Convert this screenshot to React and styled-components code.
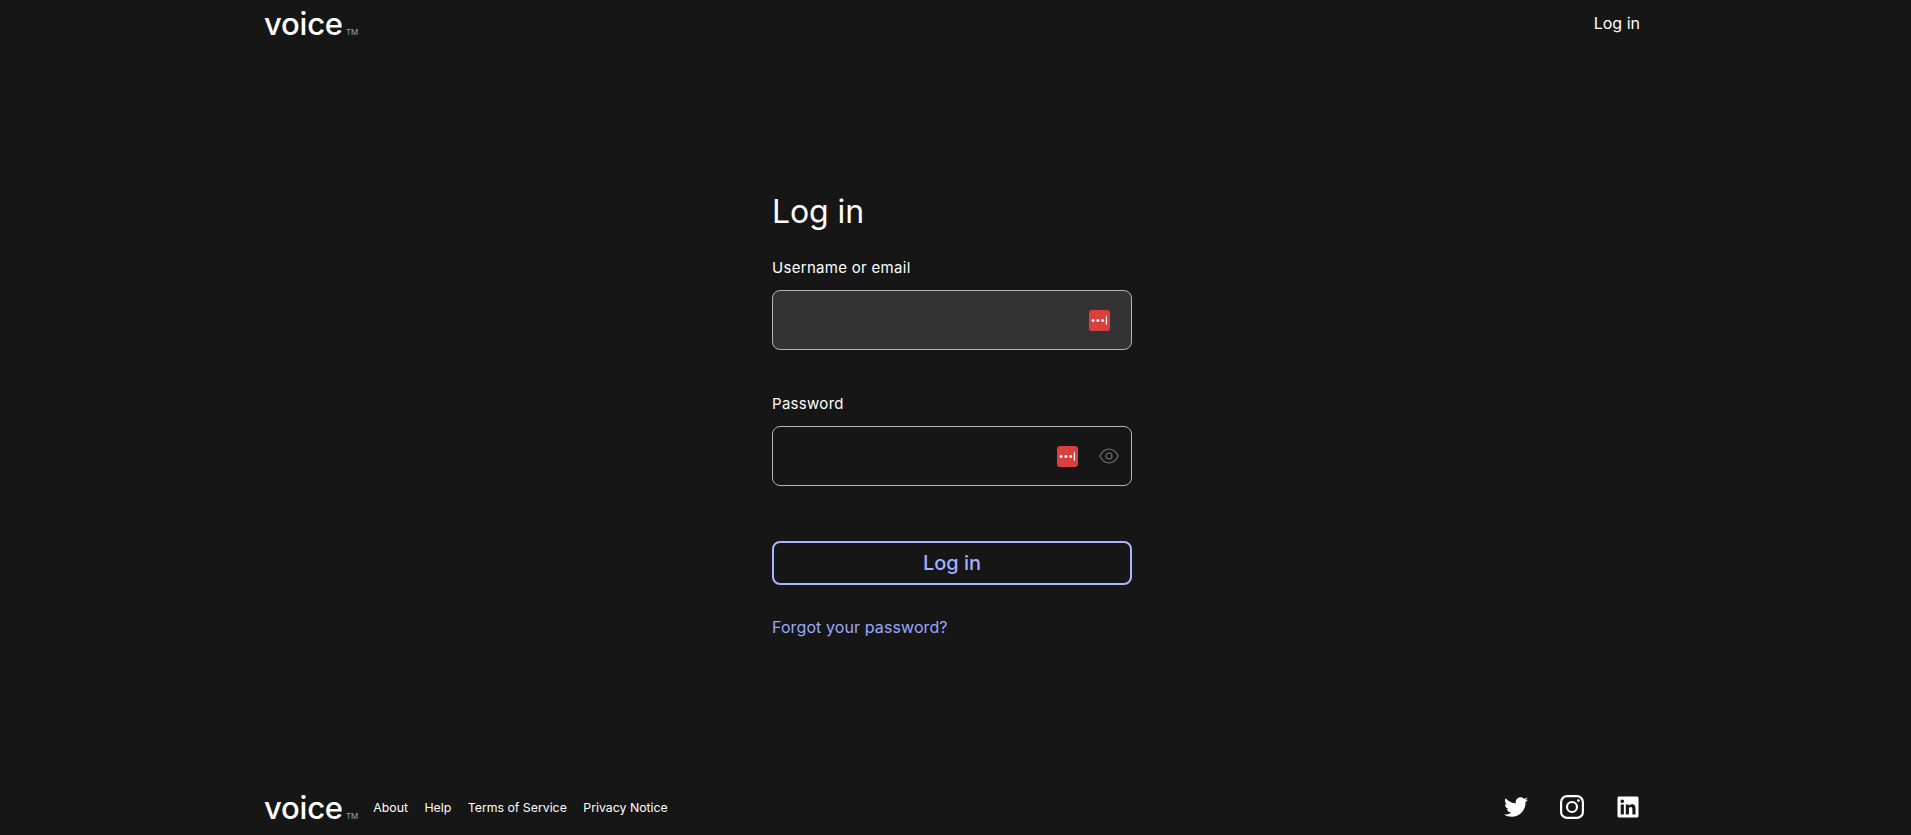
import React from "react";
import styled, { createGlobalStyle } from "styled-components";
import { FaTwitter, FaLinkedin } from "react-icons/fa";

const Global = createGlobalStyle`
  html, body { margin: 0; padding: 0; background: #161616; }
  body { font-family: "Inter", "Liberation Sans", sans-serif; color: #fff; }
  * { box-sizing: border-box; }
`;

const Page = styled.div`
  width: 1911px;
  height: 835px;
  overflow: hidden;
  padding: 0 271px 0 264px;
  display: flex;
  flex-direction: column;
  background: #161616;
`;

const Bar = styled.header`
  height: 48px;
  display: flex;
  align-items: center;
  justify-content: space-between;
`;

const Logo = styled.div`
  display: flex;
  align-items: baseline;
  gap: 3px;
  color: #fff;
`;

const LogoWord = styled.span`
  font-family: "Inter", sans-serif;
  font-size: 31px;
  line-height: 34px;
  font-weight: 500;
  letter-spacing: -0.2px;
`;

const LogoMark = styled.span`
  font-family: "Inter", sans-serif;
  font-size: 8px;
  line-height: 10px;
  color: #a0a0a0;
`;

const TopLink = styled.a`
  font-size: 16px;
  line-height: 24px;
  padding-bottom: 2px;
  color: #fff;
`;

const Main = styled.main`
  flex: 1;
  display: flex;
  justify-content: center;
  padding-top: 140px;
`;

const Form = styled.form`
  width: 360px;
  display: flex;
  flex-direction: column;
`;

const Title = styled.h1`
  margin: 0 0 20px;
  font-size: 32px;
  line-height: 48px;
  font-weight: 400;
  letter-spacing: -0.1px;
  color: #fff;
`;

const Field = styled.div`
  display: flex;
  flex-direction: column;
  margin-bottom: 42px;
`;

const Label = styled.label`
  font-size: 15px;
  line-height: 24px;
  margin-bottom: 10px;
  letter-spacing: 0.3px;
  color: #fff;
`;

const InputBox = styled.div`
  height: 60px;
  border: 1px solid #b4b4b4;
  border-radius: 8px;
  background: ${(p) => (p.$filled ? "#333333" : "#161616")};
  display: flex;
  align-items: center;
  justify-content: flex-end;
  gap: 21px;
  padding-right: ${(p) => p.$pad}px;
`;

const PassBadge = styled.svg`
  width: 21px;
  height: 21px;
  display: block;
`;

const EyeIcon = styled.svg`
  width: 20px;
  height: 20px;
  display: block;
`;

const Submit = styled.button`
  height: 44px;
  margin-top: 13px;
  border: 2px solid #abb5ff;
  border-radius: 8px;
  background: transparent;
  color: #a3afff;
  font-family: inherit;
  font-size: 20px;
  font-weight: 500;
`;

const Forgot = styled.a`
  margin-top: 30px;
  font-size: 16px;
  line-height: 24px;
  letter-spacing: 0.1px;
  color: #9ba8ff;
`;

const Footer = styled.footer`
  height: 54px;
  display: flex;
  align-items: center;
  justify-content: space-between;
`;

const FootLeft = styled.div`
  display: flex;
  align-items: center;
  gap: 15px;
`;

const FootLinks = styled.nav`
  display: flex;
  gap: 16.5px;
  padding-bottom: 1px;
`;

const FootLink = styled.a`
  font-size: 12.3px;
  line-height: 18px;
  color: #fff;
`;

const Socials = styled.div`
  display: flex;
  align-items: center;
  gap: 32px;
  font-size: 24px;
  padding-bottom: 2px;
  color: #fff;
`;

const Insta = styled.svg`
  width: 24px;
  height: 24px;
  display: block;
`;

const Badge = () => (
  <PassBadge viewBox="0 0 22 22">
    <rect width="22" height="22" rx="3.5" fill="#d93f3c" />
    <circle cx="4.3" cy="11" r="1.5" fill="#fff" />
    <circle cx="9.3" cy="11" r="1.5" fill="#fff" />
    <circle cx="14.3" cy="11" r="1.5" fill="#fff" />
    <rect x="17.6" y="6.5" width="1.2" height="9" fill="#fff" />
  </PassBadge>
);

const Brand = () => (
  <Logo>
    <LogoWord>voice</LogoWord>
    <LogoMark>TM</LogoMark>
  </Logo>
);

export default function App() {
  return (
    <Page>
      <Global />
      <Bar>
        <Brand />
        <TopLink>Log in</TopLink>
      </Bar>
      <Main>
        <Form>
          <Title>Log in</Title>
          <Field>
            <Label>Username or email</Label>
            <InputBox $filled $pad={21}>
              <Badge />
            </InputBox>
          </Field>
          <Field>
            <Label>Password</Label>
            <InputBox $pad={12}>
              <Badge />
              <EyeIcon viewBox="0 0 20 20" fill="none" stroke="#6e6e6e" strokeWidth="1.2">
                <path d="M.8 10C3 5.6 6.2 3 10 3s7 2.6 9.2 7c-2.2 4.4-5.4 7-9.2 7S3 14.4.8 10z" />
                <circle cx="10" cy="10" r="3" />
              </EyeIcon>
            </InputBox>
          </Field>
          <Submit type="button">Log in</Submit>
          <Forgot>Forgot your password?</Forgot>
        </Form>
      </Main>
      <Footer>
        <FootLeft>
          <Brand />
          <FootLinks>
            <FootLink>About</FootLink>
            <FootLink>Help</FootLink>
            <FootLink>Terms of Service</FootLink>
            <FootLink>Privacy Notice</FootLink>
          </FootLinks>
        </FootLeft>
        <Socials>
          <FaTwitter />
          <Insta viewBox="0 0 24 24" fill="none" stroke="#fff">
            <rect x="1.1" y="1.1" width="21.8" height="21.8" rx="6" strokeWidth="2.2" />
            <circle cx="12" cy="12" r="5" strokeWidth="2.2" />
            <circle cx="18.4" cy="5.6" r="1.4" fill="#fff" stroke="none" />
          </Insta>
          <FaLinkedin />
        </Socials>
      </Footer>
    </Page>
  );
}
